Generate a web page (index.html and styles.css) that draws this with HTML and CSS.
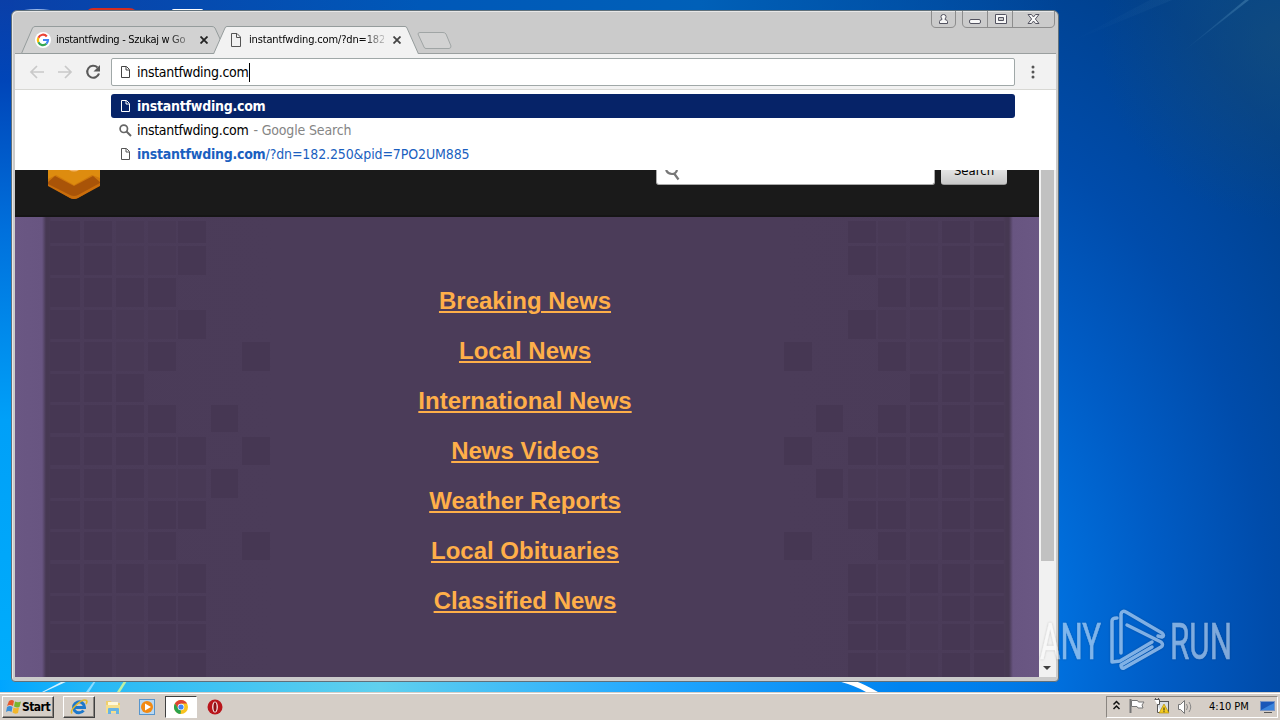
FILE: index.html
```html
<!DOCTYPE html>
<html lang="en">
<head>
    <meta charset="UTF-8">
    <title>instantfwding.com</title>
    <link rel="stylesheet" href="styles.css">
</head>
<body>
    <div class="desktop">
        <svg class="wallpaper" width="1280" height="692" viewBox="0 0 1280 692">
            <defs>
                <linearGradient id="beam" x1="0" x2="1"><stop offset="0" stop-color="#5d9ac4" stop-opacity="0"/><stop offset="1" stop-color="#5d9ac4" stop-opacity=".4"/></linearGradient>
            </defs>
            <path d="M1180 54L1245 0h4z" fill="url(#beam)"/>
            <path d="M1070 42L1150 0h22z" fill="url(#beam)" opacity=".2"/>
            <path d="M44 692l24-11h-5l-21 11z" fill="#d5f2ff"/>
            <path d="M86 692l8-11h2l-7 11z" fill="#8cdcff"/>
            <path d="M117 692l7-11h3l-7 11z" fill="#bdf0a5"/>
            <path d="M838 681q18 5 28 11h12q-14-8-23-11z" fill="#fff"/>
            <path d="M24 10q13-2 26 0z" fill="#9db9e8"/>
            <path d="M88 10q2-2 5-2h36q4 0 6 2z" fill="#d42d20"/>
            <path d="M172 10q0-1 2-1h27q2 0 2 1z" fill="#fff"/>
        </svg>

        <div class="window">
            <div class="titlebar">
                <div class="tab tab-first">
                    <svg class="tab-shape" width="200" height="28"><path d="M.5 27.5L11.500 2Q12.500.5 14 .5H191Q193 .5 194 2L199.500 14 194 27.500z" fill="#d2d2d2" stroke="#959c9c"/></svg>
                    <svg class="favicon" width="16" height="16" viewBox="0 0 16 16"><circle cx="8" cy="8" r="8" fill="#fff"/><g fill="none" stroke-width="2.200"><path d="M3.400 5.700A5 5 0 0 1 11.800 4.500" stroke="#ea4335"/><path d="M3.400 10.300A5 5 0 0 1 3.400 5.700" stroke="#fbbc05"/><path d="M11.400 11.700A5 5 0 0 1 3.400 10.300" stroke="#34a853"/><path d="M8 8H13A5 5 0 0 1 11.400 11.700" stroke="#4285f4"/></g></svg>
                    <span class="tab-title">instantfwding - Szukaj w Go</span>
                    <svg class="tab-close" width="8" height="8" viewBox="0 0 8 8"><path d="M.5.5l7 7m0-7l-7 7" stroke="#222" stroke-width="1.800"/></svg>
                </div>
                <div class="tab tab-active">
                    <svg class="tab-shape" width="206" height="28"><path d="M.5 28L12 2Q12.500.5 14 .5H192Q193.500.5 194 2L205.500 28" fill="#f2f2f2" stroke="#959c9c"/></svg>
                    <svg class="file-icon" width="10" height="14" viewBox="0 0 10 14"><path d="M.5.500H6L9.500 4V13.500H.5zM5.500 1V4.500H9" fill="none" stroke="#555"/></svg>
                    <span class="tab-title">instantfwding.com/?dn=182</span>
                    <svg class="tab-close" width="8" height="8" viewBox="0 0 8 8"><path d="M.5.5l7 7m0-7l-7 7" stroke="#444" stroke-width="1.800"/></svg>
                </div>
                <svg class="new-tab" width="36" height="18"><path d="M1 2Q1 .5 3 .5H26Q28 .5 29 2L34 14Q34 16.500 32 16.500H9Q7.500 16.500 7 15z" fill="#d2d2d2" stroke="#a0a5a5"/></svg>
                <svg class="controls" width="126" height="18" viewBox="0 0 126 18">
                    <g fill="none" stroke="#8d8d8d">
                        <path d="M.5 0V12Q.5 16.500 5 16.500H20Q24.500 16.500 24.500 12V0"/>
                        <path d="M31.500 0V12Q31.500 16.500 36 16.500H119Q123.500 16.500 123.500 12V0M56.500 0V16M81.500 0V16"/>
                    </g>
                    <g fill="#f7f7f7" stroke="#535360">
                        <path d="M8.500 12.500V10.500Q8.500 9 11 8.500V8Q10 7 10 5.500Q10 3.500 12.500 3.500T15 5.500Q15 7 14 8V8.500Q16.500 9 16.500 10.500V12.500z"/>
                        <rect x="38.500" y="8.500" width="11" height="4" rx="1.500"/>
                        <path d="M64.500 3.500h10q1 0 1 1v8h-11zM67.500 6.500v3h5v-3z" fill-rule="evenodd"/>
                        <path d="M97 3.500h3.500l2 2.500 2-2.500h3.500l-3.600 4.500 3.600 4.500h-3.500l-2-2.500-2 2.500H97l3.600-4.500z"/>
                    </g>
                </svg>
            </div>

            <div class="toolbar">
                <svg class="nav" width="76" height="16" viewBox="0 0 76 16">
                    <g fill="none" stroke="#c9c9c9" stroke-width="1.700">
                        <path d="M15 8H2M8 2L2 8l6 6"/>
                        <path d="M29 8H42M36 2l6 6-6 6"/>
                        <path d="M68.500 3.500A6 6 0 1 0 70 9.500" stroke="#5a5a5a" stroke-width="2.100"/>
                    </g>
                    <path d="M71 1V7.500H64.500z" fill="#5a5a5a"/>
                </svg>
                <div class="omnibox">
                    <svg class="file-icon" width="9" height="12" viewBox="0 0 9 12"><path d="M.5.500H5.500L8.500 3.500V11.500H.5zM5 1V4H8" fill="none" stroke="#444"/></svg>
                    <span class="url">instantfwding.com</span><i class="caret"></i>
                </div>
                <svg class="menu" width="4" height="14"><g fill="#555"><circle cx="2" cy="2" r="1.500"/><circle cx="2" cy="7" r="1.500"/><circle cx="2" cy="12" r="1.500"/></g></svg>
            </div>

            <div class="suggestions">
                <div class="suggestion selected">
                    <svg class="file-icon" width="9" height="12" viewBox="0 0 9 12"><path d="M.5.500H5.500L8.500 3.500V11.500H.5zM5 1V4H8" fill="none" stroke="#fff"/></svg>
                    <b>instantfwding.com</b>
                </div>
                <div class="suggestion">
                    <svg class="search-icon" width="13" height="13" viewBox="0 0 13 13"><g fill="none" stroke="#666" stroke-width="1.700"><circle cx="4.800" cy="4.800" r="3.700"/><path d="M7.500 7.500l4.500 4.500" stroke-width="2"/></g></svg>
                    <span class="url">instantfwding.com</span><span class="hint">- Google Search</span>
                </div>
                <div class="suggestion link">
                    <svg class="file-icon" width="9" height="12" viewBox="0 0 9 12"><path d="M.5.500H5.500L8.500 3.500V11.500H.5zM5 1V4H8" fill="none" stroke="#555"/></svg>
                    <b>instantfwding.com</b><span class="query">/?dn=182.250&amp;pid=7PO2UM885</span>
                </div>
            </div>

            <div class="viewport">
                <div class="page">
                    <div class="page-header">
                        <svg class="logo" width="52" height="30" viewBox="0 0 52 30">
                            <path d="M0 0H52V13L26 29 0 13z" fill="#cf780c"/>
                            <path d="M0 0H52V8L44 5 26 15 8 5 0 9z" fill="#de8c0f"/>
                            <path d="M0 12L7 6 26 16 45 6 52 12V15L30 28Q26 30 22 28L0 15z" fill="#a95408"/>
                            <path d="M0 14L22 25Q26 27 30 25L52 13V16L30 28Q26 30 22 28L0 16z" fill="#c96d0b"/>
                            <path d="M21 0h10q-5 3-10 0z" fill="#f4b76d"/>
                        </svg>
                        <div class="search-field"><svg width="16" height="12" viewBox="0 0 16 12"><path d="M1 0Q3 4 7 4T12 0M9.500 4L13.500 9.500" fill="none" stroke="#777" stroke-width="2.200"/></svg></div>
                        <div class="search-button"><span>Search</span></div>
                    </div>
                    <div class="page-body">
                        <svg class="mosaic" width="1024" height="460" viewBox="15 217 1024 460">
                            <defs>
                                <g id="tiles">
                                    <path fill="#463753" d="M50 221h30v22H50zM84 221h28v22H84zM178 221h28v22h-28zM50 246h30v29H50zM84 246h28v29H84zM178 246h28v29h-28zM50 278h30v29H50zM84 278h28v29H84zM116 278h28v29h-28zM148 278h28v29h-28zM50 310h30v29H50zM84 310h28v29H84zM178 310h28v29h-28zM50 342h30v29H50zM84 342h28v29H84zM148 342h28v29h-28zM242 342h28v29h-28zM50 374h30v28H50zM84 374h28v28H84zM116 374h28v28h-28zM50 405h30v28H50zM84 405h28v28H84zM116 405h28v28h-28zM148 405h28v28h-28zM211 405h27v27h-27zM50 437h30v28H50zM84 437h28v28H84zM116 437h28v28h-28zM148 437h28v28h-28zM178 437h28v28h-28zM242 437h28v28h-28z"/>
                                    <path fill="#463753" d="M50 469h30v29H50zM84 469h28v29H84zM116 469h28v29h-28zM211 469h27v29h-27zM50 501h30v28H50zM84 501h28v28H84zM148 501h28v28h-28zM178 501h28v28h-28zM50 532h30v28H50zM84 532h28v28H84zM148 532h28v28h-28zM242 532h28v28h-28zM50 564h30v29H50zM84 564h28v29H84zM116 564h28v29h-28zM178 564h28v29h-28zM50 596h30v25H50zM84 596h28v25H84zM148 596h28v25h-28zM178 596h28v25h-28zM50 624h30v26H50zM84 624h28v26H84zM148 624h28v26h-28zM178 624h28v26h-28zM50 653h30v24H50zM84 653h28v24H84zM178 653h28v24h-28z"/>
                                    <path fill="#483955" d="M116 221h28v22h-28zM148 221h28v22h-28zM116 246h28v29h-28zM148 246h28v29h-28zM116 310h28v29h-28zM148 310h28v29h-28zM116 342h28v29h-28zM148 469h28v29h-28zM178 469h28v29h-28zM116 501h28v28h-28zM116 532h28v28h-28zM148 564h28v29h-28zM116 596h28v25h-28zM116 624h28v26h-28zM116 653h28v24h-28zM148 653h28v24h-28z"/>
                                </g>
                            </defs>
                            <use href="#tiles"/>
                            <use href="#tiles" transform="matrix(-1 0 0 1 1054 0)"/>
                        </svg>
                        <div class="links">
                            <a>Breaking News</a>
                            <a>Local News</a>
                            <a>International News</a>
                            <a>News Videos</a>
                            <a>Weather Reports</a>
                            <a>Local Obituaries</a>
                            <a>Classified News</a>
                        </div>
                    </div>
                </div>
                <div class="scrollbar">
                    <div class="thumb"></div>
                    <svg width="8" height="4"><path d="M0 0h8L4 4z" fill="#404040"/></svg>
                </div>
            </div>
        </div>

        <svg class="watermark" width="200" height="64" viewBox="0 0 200 64">
            <g fill="#fff" stroke="#fff" stroke-width=".6" font-family="Roboto, sans-serif" font-size="50">
                <text x="0" y="51" textLength="61" lengthAdjust="spacingAndGlyphs">ANY</text>
                <text x="130" y="51" textLength="62" lengthAdjust="spacingAndGlyphs">RUN</text>
            </g>
            <g fill="none" stroke="#fff" stroke-width="3.500" stroke-linejoin="round" stroke-linecap="round">
                <path d="M77 10Q72 10 72 13V54L80 53 112 34"/>
                <path d="M81 45V6Q82 2 86 4L122 25Q125 28 122 29L118 28"/>
                <path d="M87 17L121 34Q124 37 121 39L84 60Q81 61 81 57L112 39"/>
            </g>
        </svg>
    </div>

    <div class="taskbar">
        <div class="start">
            <svg width="16" height="16" viewBox="0 0 16 16"><path d="M3 2Q6 0 8 2L7 7Q4 5 1 7z" fill="#e5582b"/><path d="M9 2.500Q12 4 15 2.500L13.500 8Q11 9 8 7.500z" fill="#79b52d"/><path d="M1 8Q4 6 6.500 8L5.500 13Q3 11 0 13z" fill="#3a8fd8"/><path d="M7.500 8.500Q10 10 13 8.500L12 14Q9 15.500 6.500 13.500z" fill="#f2b62b"/></svg>
            <b>Start</b>
        </div>
        <div class="task raised">
            <svg width="18" height="18" viewBox="0 0 18 18"><path d="M13.500 12.500A5.500 5.500 0 1 1 14.500 9.500H5" fill="none" stroke="#1d78cb" stroke-width="3"/><path d="M2 15.500C-1 12 12 0 16.500 2.500Q17.500 4 16 6" fill="none" stroke="#e3b92c" stroke-width="1.600"/></svg>
        </div>
        <div class="task">
            <svg width="18" height="18" viewBox="0 0 18 18"><path d="M2 3h5l1 2h8v10H2z" fill="#efcf6d"/><path d="M4 4h10v4H4z" fill="#fff8d8"/><path d="M2 7h14v8H2z" fill="#f5df8d"/><path d="M4 16v-5q0-1 1-1h9q1 0 1 1v5h-3v-3H7v3z" fill="#68b4e4"/></svg>
        </div>
        <div class="task">
            <svg width="18" height="18" viewBox="0 0 18 18"><rect x="1.500" y="1.500" width="15" height="15" fill="#b9d8f2" stroke="#5795cc"/><circle cx="9" cy="9" r="6" fill="#f28a13"/><path d="M7 5.500l6 3.500-6 3.500z" fill="#fff"/></svg>
        </div>
        <div class="task pressed">
            <svg width="16" height="16" viewBox="0 0 16 16"><circle cx="8" cy="8" r="7" fill="#f9c31f"/><path d="M1.900 4.500A7 7 0 0 1 14.100 4.500H8L5 9.500z" fill="#de4334"/><path d="M1.900 4.500L5.500 10 8 11.500 7.500 15A7 7 0 0 1 1.900 4.500z" fill="#2ba24c"/><circle cx="8" cy="8" r="3.300" fill="#fff"/><circle cx="8" cy="8" r="2.600" fill="#4285f4"/></svg>
        </div>
        <div class="task">
            <svg width="16" height="16" viewBox="0 0 16 16"><circle cx="8" cy="8" r="7.500" fill="#b9151b"/><ellipse cx="8" cy="8" rx="2.800" ry="5.500" fill="#fff"/><ellipse cx="8" cy="8" rx="1.600" ry="4.700" fill="#8f1015"/></svg>
        </div>
        <div class="tray">
            <svg width="82" height="18" viewBox="0 0 82 18">
                <path d="M2.500 6.500l3-3 3 3M2.500 11l3-3 3 3" fill="none" stroke="#111" stroke-width="1.500"/>
                <path d="M19.500 1v14" stroke="#777" stroke-width="2"/><path d="M20.500 2.500h6l1 1.500h5.500l-2 3 1 3h-5l-1-1.500h-5.500z" fill="#fff" stroke="#777"/>
                <rect x="46.500" y="3.500" width="11" height="10" fill="#d8dde2" stroke="#555"/><path d="M43.500 1.500h5v5h-2v8h4M44.500 0v2M47.500 0v2" fill="#fff" stroke="#555"/><path d="M53 6l5 9H48z" fill="#f5cc20" stroke="#a88500" stroke-width=".6"/><path d="M53 9.500v3M53 13.200v1" stroke="#222"/>
                <path d="M67.500 6.500h2l4-4v13l-4-4h-2z" fill="#fff" stroke="#777"/><path d="M75.500 6q2 3 0 6M78 4q3.500 5 0 10" fill="none" stroke="#888"/>
            </svg>
            <span class="clock">4:10 PM</span>
            <svg width="16" height="14" viewBox="0 0 16 14"><rect x=".5" y="1.500" width="14" height="9" fill="#1a57b8" stroke="#7b96c4"/><path d="M1 10L14 3v7z" fill="#3a84dc"/><path d="M4 12.500h8" stroke="#555"/></svg>
        </div>
    </div>
</body>
</html>
```
FILE: styles.css
```css
body {
    margin: 0;
    width: 1280px;
    height: 720px;
    overflow: hidden;
    display: flex;
    flex-direction: column;
    font-family: "DejaVu Sans Condensed", "DejaVu Sans", Tahoma, sans-serif;
    font-size: 14px;
    color: #000;
}
svg {
    display: block;
    flex: none;
}
.desktop {
    position: relative;
    height: 692px;
    background:
        linear-gradient(90deg, #00a5ff, #28b9f5 100px, #60d0ee 380px, #23a8ff 650px, #0084f0 900px, rgba(0, 119, 230, 0) 1060px) 0 680px / 1280px 12px no-repeat,
        linear-gradient(#0a3fa8, #0045b8 80px, #0070dc 230px, #00a0f8 420px, #00aefc) 0 0 / 14px 692px no-repeat,
        linear-gradient(90deg, #0a3fa8, #0058b8 420px, #0060b8 700px, rgba(0, 75, 150, 0) 1060px) 0 0 / 1280px 12px no-repeat,
        radial-gradient(circle at 1280px 40px, rgba(28, 80, 120, .55), rgba(0, 66, 138, 0) 180px),
        radial-gradient(ellipse 560px 800px at 900px 640px, #0084f2 0, #0070de 28%, #005cc5 47%, #004cab 66%, #00408c 92%, #00428a);
}
.wallpaper {
    position: absolute;
    top: 0;
    left: 0;
}

/* browser window */
.window {
    position: absolute;
    left: 11px;
    top: 10px;
    box-sizing: border-box;
    width: 1048px;
    height: 672px;
    padding: 0 2px 3px 3px;
    border: 1px solid #60707a;
    border-radius: 6px 6px 4px 4px;
    background: #cbcbcb;
    box-shadow: inset 1px 1px #e8e8e8;
}
.titlebar {
    display: flex;
    align-items: flex-end;
    height: 43px;
    padding-left: 6px;
    position: relative;
    box-shadow: inset 0 -1px #9a9f9f;
}
.tab {
    position: relative;
    display: flex;
    align-items: center;
    box-sizing: border-box;
    height: 28px;
    font-size: 11px;
}
.tab-first {
    width: 200px;
    padding-left: 14px;
}
.tab-active {
    width: 206px;
    margin-left: -8px;
    padding-left: 18px;
    z-index: 1;
}
.tab-shape {
    position: absolute;
    left: 0;
    top: 0;
}
.favicon, .file-icon, .tab-title, .tab-close {
    position: relative;
}
.tab-title {
    width: 135px;
    margin: 0 9px 2px 5px;
    overflow: hidden;
    white-space: nowrap;
    letter-spacing: -.3px;
    -webkit-mask-image: linear-gradient(90deg, #000 112px, rgba(0, 0, 0, .2));
    mask-image: linear-gradient(90deg, #000 112px, rgba(0, 0, 0, .2));
}
.tab-active .tab-title {
    margin-left: 8px;
    letter-spacing: -.15px;
}
.new-tab {
    margin: 0 0 4px -2px;
}
.controls {
    position: absolute;
    right: -1px;
    top: 0;
}
.toolbar {
    display: flex;
    align-items: center;
    box-sizing: border-box;
    height: 36px;
    padding-left: 14px;
    background: #f2f2f2;
    border-bottom: 1px solid #d8d8d4;
}
.omnibox {
    display: flex;
    align-items: center;
    box-sizing: border-box;
    width: 904px;
    height: 28px;
    margin: 1px 16px 0 6px;
    padding-left: 9px;
    background: #fff;
    border: 1px solid #a0a8a8;
    border-radius: 2px;
}
.url {
    margin-left: 7px;
    letter-spacing: -.3px;
}
.caret {
    width: 1px;
    height: 19px;
    margin-left: 1px;
    background: #000;
}
.suggestions {
    height: 76px;
    padding: 4px 41px 0 96px;
    background: #fff;
}
.suggestion {
    display: flex;
    align-items: center;
    height: 24px;
    padding-left: 10px;
}
.suggestion b {
    margin-left: 7px;
    letter-spacing: -.25px;
}
.selected {
    background: #062368;
    color: #fff;
    border-radius: 3px;
}
.search-icon {
    margin: 0 -2px;
}
.hint {
    margin-left: 5px;
    color: #858585;
    letter-spacing: -.15px;
}
.query {
    letter-spacing: -.12px;
}
.link {
    color: #1b5fc0;
}

/* page inside the browser */
.viewport {
    display: flex;
    height: 507px;
}
.page {
    width: 1024px;
}
.page-header {
    display: flex;
    box-sizing: border-box;
    height: 47px;
    padding-left: 33px;
    overflow: hidden;
    background: #1a1a1a;
    border-bottom: 2px solid #151515;
}
.search-field {
    box-sizing: border-box;
    width: 279px;
    height: 15px;
    margin-left: 556px;
    padding-left: 8px;
    background: #fff;
    border: 1px solid #aaa;
    border-top: 0;
    border-radius: 0 0 3px 3px;
}
.search-button {
    box-sizing: border-box;
    width: 66px;
    height: 15px;
    margin-left: 6px;
    overflow: hidden;
    text-align: center;
    background: linear-gradient(#e4e4e4, #c8c8c8);
    border-bottom: 1px solid #999;
    border-radius: 0 0 3px 3px;
}
.search-button span {
    display: block;
    margin-top: -7px;
    font-size: 13px;
    line-height: 15px;
}
.page-body {
    position: relative;
    height: 460px;
    background: linear-gradient(90deg, #6a5783 0, #685581 27px, #463852 31px, #463852 34px, #4a3b58 36px, #4b3c59 260px, #4b3c59 770px, #4a3b58 988px, #463852 991px, #463852 994px, #685581 998px, #6a5783);
}
.mosaic {
    position: absolute;
    left: 0;
    top: 0;
}
.links {
    position: relative;
    display: flex;
    flex-direction: column;
    align-items: center;
    padding: 59px 4px 0 0;
}
.links a {
    font: bold 24px/50px "Liberation Sans", Arial, sans-serif;
    color: #ffaf49;
    text-decoration: underline;
    text-decoration-thickness: 2px;
    text-underline-offset: 2px;
}
.scrollbar {
    display: flex;
    flex-direction: column;
    justify-content: space-between;
    align-items: center;
    box-sizing: border-box;
    width: 17px;
    padding: 0 1px 7px 0;
    background: #f1f1f1;
}
.thumb {
    width: 13px;
    height: 391px;
    background: #c1c1c1;
}
.watermark {
    position: absolute;
    left: 1040px;
    top: 608px;
    opacity: .5;
    filter: drop-shadow(0 0 1px rgba(0, 0, 0, .35));
}

/* taskbar */
.taskbar {
    display: flex;
    align-items: center;
    box-sizing: border-box;
    height: 28px;
    padding: 0 2px;
    background: #d5cec7;
    border-top: 1px solid #d5cec7;
    box-shadow: inset 0 1px #fff;
}
.start, .task {
    display: flex;
    align-items: center;
    justify-content: center;
    box-sizing: border-box;
    height: 22px;
}
.start {
    width: 52px;
    font-size: 12px;
    letter-spacing: -.5px;
}
.start, .raised {
    border: 1px solid;
    border-color: #fff #404040 #404040 #fff;
    box-shadow: inset -1px -1px #8a8580;
}
.task {
    width: 32px;
    margin-right: 2px;
}
.raised {
    margin-left: 9px;
}
.pressed {
    background: #fff;
    border: 1px solid;
    border-color: #404040 #fff #fff #404040;
}
.tray {
    display: flex;
    align-items: center;
    box-sizing: border-box;
    width: 172px;
    height: 22px;
    margin-left: auto;
    padding-left: 4px;
    border: 1px solid;
    border-color: #8a8580 #fff #fff #8a8580;
}
.clock {
    width: 40px;
    margin: 0 11px 0 16px;
    font-size: 11px;
    white-space: nowrap;
}
```
